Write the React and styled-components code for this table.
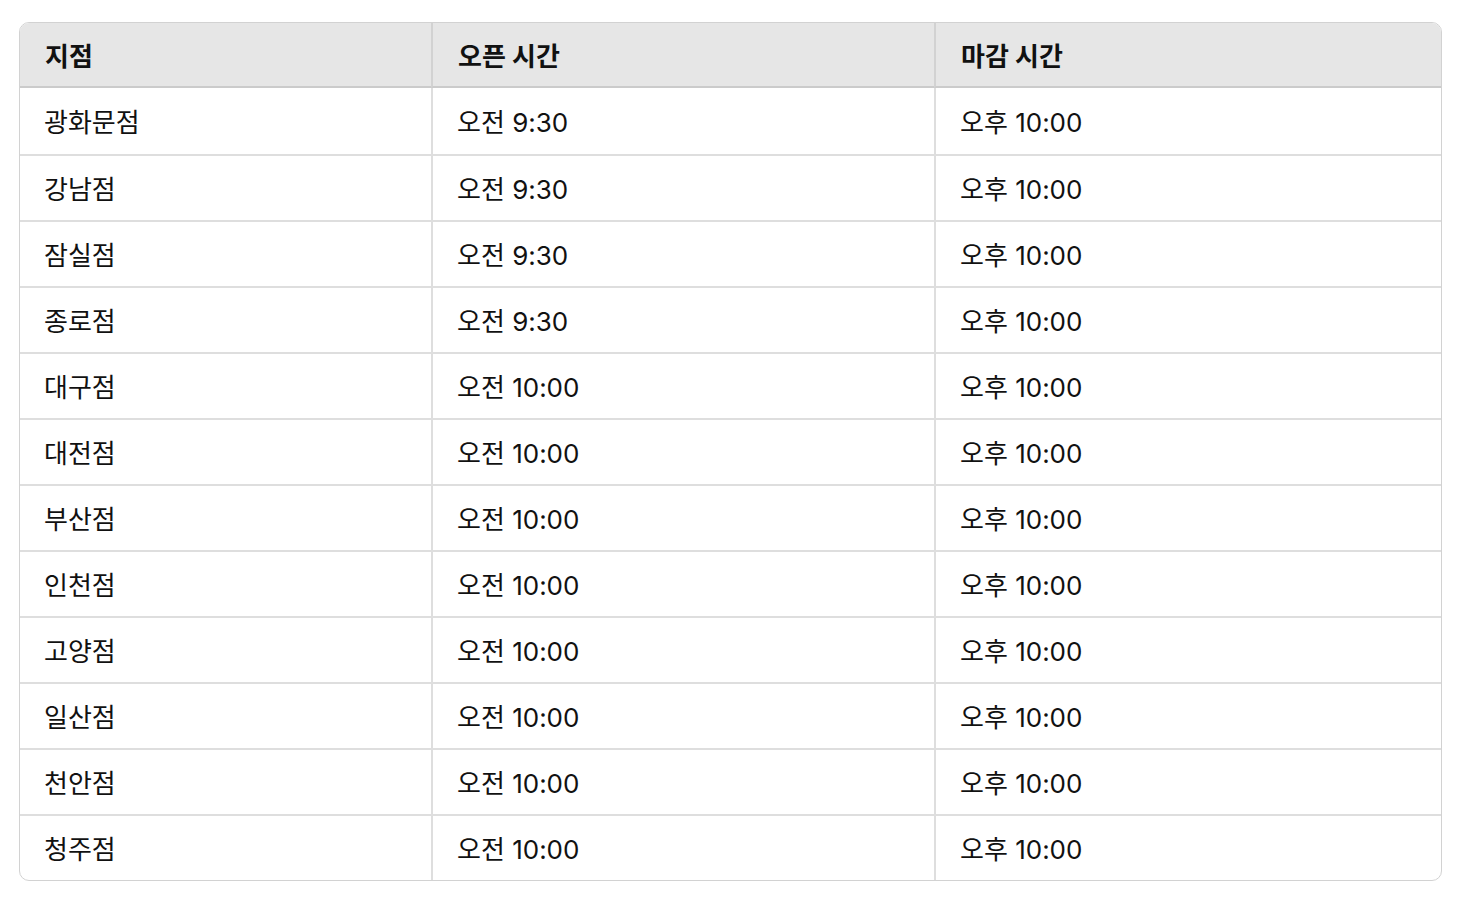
import React from 'react';
import styled, { createGlobalStyle } from 'styled-components';

const GlobalStyle = createGlobalStyle`
  html, body {
    margin: 0;
    padding: 0;
    background: #ffffff;
  }
  body {
    font-family: "Inter", "Noto Sans CJK KR", sans-serif;
    color: #111111;
  }
`;

const Page = styled.div`
  padding: 22px 29px 0 19px;
`;

const Table = styled.table`
  width: 1423px;
  border-collapse: separate;
  border-spacing: 0;
  border: 1px solid #d2d2d2;
  border-radius: 10px;
  overflow: hidden;
  table-layout: fixed;
`;

const HeadCell = styled.th`
  width: ${props => props.width}px;
  height: 65px;
  padding: 0 25px;
  background: #e6e6e6;
  border-bottom: 2px solid #cbcbcb;
  border-left: ${props => (props.first ? 'none' : '2px solid #d2d2d2')};
  text-align: left;
  font-size: 26px;
  font-weight: 700;
  color: #111111;
  box-sizing: border-box;
`;

const Cell = styled.td`
  height: 66px;
  padding: 0 24px;
  padding-bottom: 2px;
  border-top: ${props => (props.top ? 'none' : '2px solid #dedede')};
  border-left: ${props => (props.first ? 'none' : '2px solid #dedede')};
  font-size: 26px;
  font-weight: 400;
  color: #111111;
  box-sizing: border-box;
`;

const branches = [
  ['광화문점', '오전 9:30', '오후 10:00'],
  ['강남점', '오전 9:30', '오후 10:00'],
  ['잠실점', '오전 9:30', '오후 10:00'],
  ['종로점', '오전 9:30', '오후 10:00'],
  ['대구점', '오전 10:00', '오후 10:00'],
  ['대전점', '오전 10:00', '오후 10:00'],
  ['부산점', '오전 10:00', '오후 10:00'],
  ['인천점', '오전 10:00', '오후 10:00'],
  ['고양점', '오전 10:00', '오후 10:00'],
  ['일산점', '오전 10:00', '오후 10:00'],
  ['천안점', '오전 10:00', '오후 10:00'],
  ['청주점', '오전 10:00', '오후 10:00'],
];

export default function App() {
  return (
    <Page>
      <GlobalStyle />
      <Table>
        <thead>
          <tr>
            <HeadCell first width={411}>지점</HeadCell>
            <HeadCell width={503}>오픈 시간</HeadCell>
            <HeadCell width={507}>마감 시간</HeadCell>
          </tr>
        </thead>
        <tbody>
          {branches.map((row, i) => (
            <tr key={row[0]}>
              {row.map((value, j) => (
                <Cell key={j} first={j === 0} top={i === 0}>
                  {value}
                </Cell>
              ))}
            </tr>
          ))}
        </tbody>
      </Table>
    </Page>
  );
}
